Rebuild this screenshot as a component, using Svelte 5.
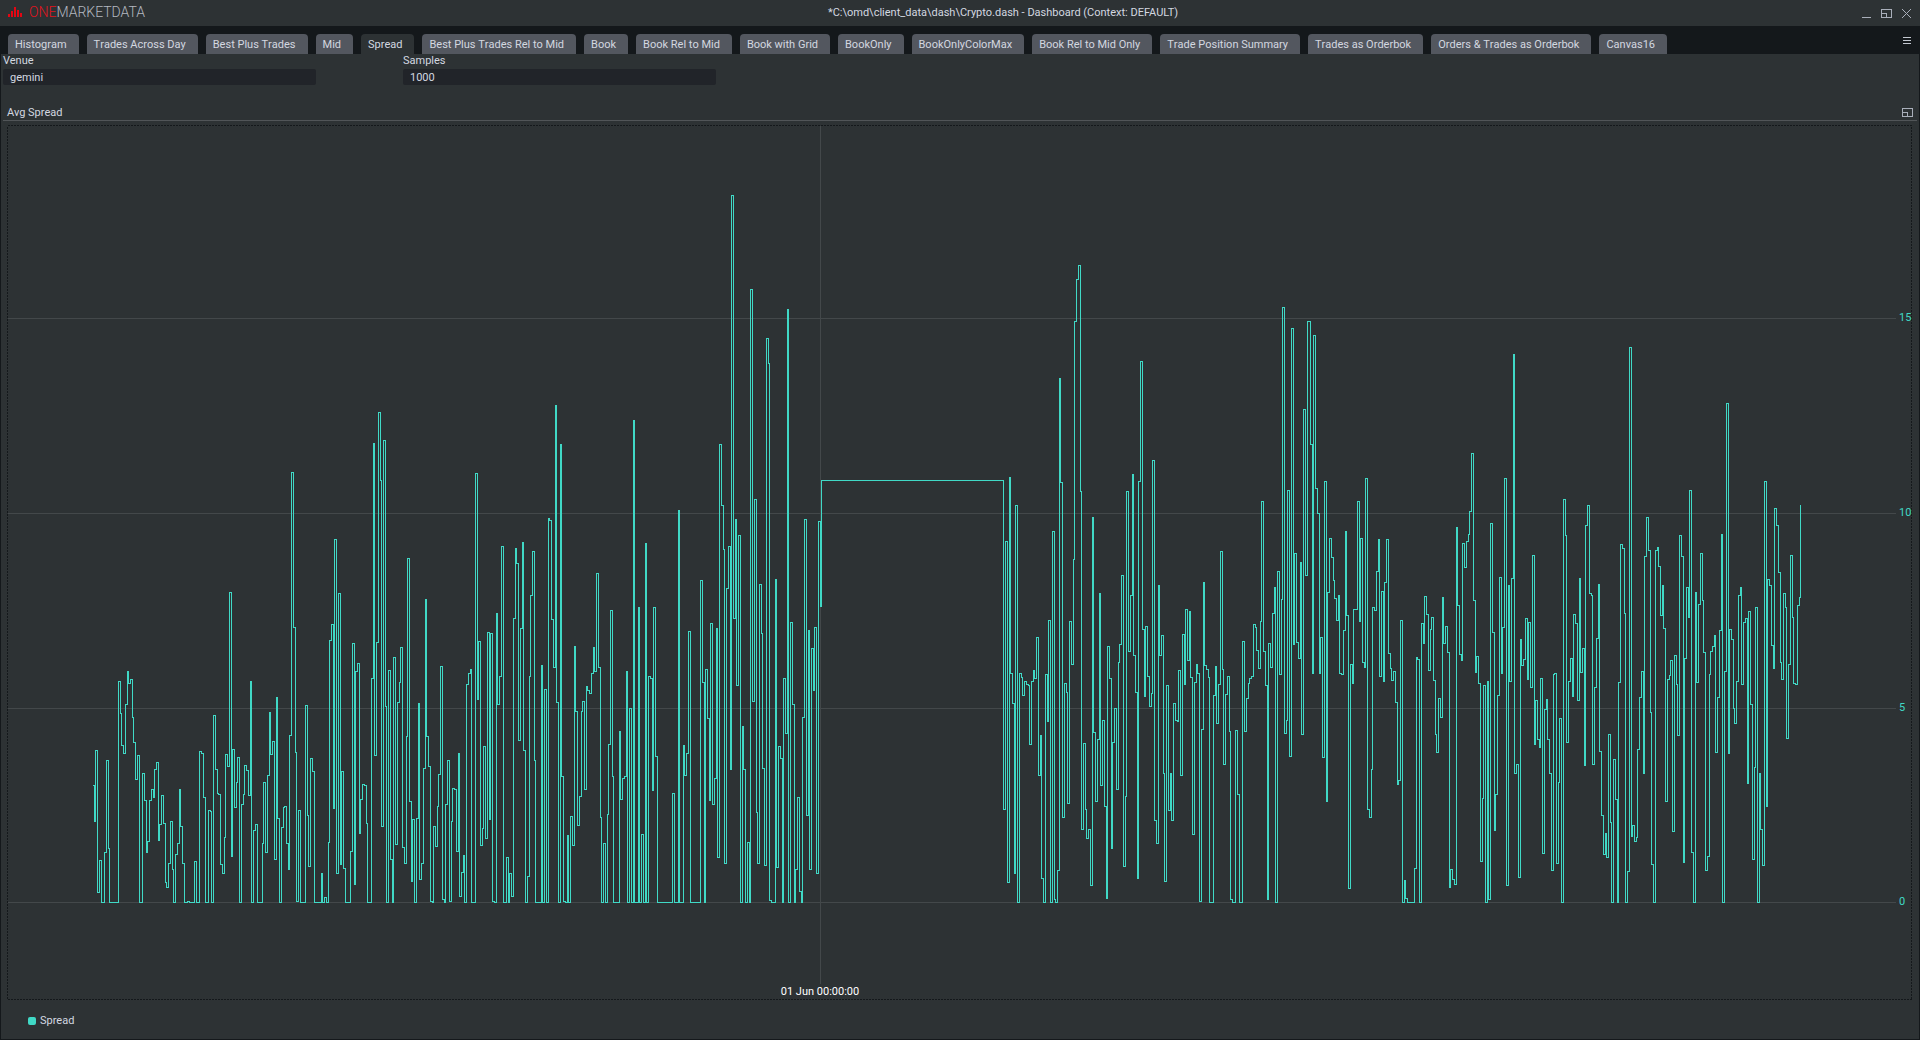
<script lang="ts">
	const tabs = [
		'Histogram',
		'Trades Across Day',
		'Best Plus Trades',
		'Mid',
		'Spread',
		'Best Plus Trades Rel to Mid',
		'Book',
		'Book Rel to Mid',
		'Book with Grid',
		'BookOnly',
		'BookOnlyColorMax',
		'Book Rel to Mid Only',
		'Trade Position Summary',
		'Trades as Orderbok',
		'Orders & Trades as Orderbok',
		'Canvas16'
	];
	let active = $state('Spread');
	let venue = $state('gemini');
	let samples = $state('1000');

	// plot area in chart units
	const plot = { x: 7, y: 125, w: 1905, h: 875 };
	const ticks = [
		{ value: 15, y: 318 },
		{ value: 10, y: 513 },
		{ value: 5, y: 708 },
		{ value: 0, y: 902 }
	];
	const dayX = 820;

	// step samples "x:level", packed in blocks with their own origin and resolution
	const kx = 3;
	const blocks = [
		{
			x: 80,
			y: 440,
			ky: 3,
			steps: `37:1036 44:1143 46:931 52:1357 58:1261 64:1387 73:1237 79:961 85:1225 88:1387 115:724 121:820 124:916 130:940 136:793
				142:694 145:730 151:718 157:832 160:907 166:1018 172:946 178:1387 187:1000 193:1081 199:1237 202:1204 208:1081 214:1048
				220:1072 223:988 229:967 235:1201 238:1153 244:1066 250:1150 256:1327 259:1342 265:1270 271:1144 277:1288 280:1387
				286:1243 292:1210 298:1048 301:1159 307:1270 313:1387 322:1384 328:1387 343:1264 349:1387 358:934 364:940 370:1072
				376:1387 385:1111 391:1114 394:1387 400:826 406:988 412:1060 415:1063 421:1273 427:1300 433:1192 436:943 442:979
				448:457 454:1249 457:928 463:1102 469:1027 472:952 478:1387 484:1093 490:1063 493:976 499:991 505:1066 511:724
				514:1387 520:1171 526:1153 532:1387 547:1210 550:1027 556:1237 562:1006 568:817 571:943 577:904 583:1258 589:772
				592:1135 598:1387 604:1162 610:1102 613:1099 619:1210 625:1288 628:886 634:97 640:562 646:937 649:1384 655:1111
				661:1387 676:796 682:1126 685:1279 691:955 697:994 703:1387 724:1300 727:1387 733:1372 739:1387 745:1207 748:601
				754:553 760:1105 763:298 769:1300 775:460 781:1273 784:994 790:1285 796:1387 811:1234 817:610 823:1333 826:694
				832:670 838:1180 841:1078 847:1033 853:1036 859:1150 862:1387 874:715 880:10 883:946 889:607`
		},
		{
			x: 360,
			y: 390,
			ky: 2.958,
			steps: `55:66 61:267 64:1291 70:149 76:936 79:1516 85:829 91:1388 97:1516 100:791 106:1344 112:924 118:865 121:761
				127:1353 133:1400 139:1025 142:498 148:1217 154:1454 157:1270 163:1516 169:1267 175:927 178:1448 184:1400 190:1119
				196:619 199:1025 205:1113 211:1513 217:1516 220:1291 226:1350 232:1232 235:1137 241:818 247:1507 253:1516 256:1226
				262:1096 268:1513 274:1276 277:1178 283:1181 289:1365 295:1075 298:1498 304:1427 310:1377 313:1516 319:871 325:838
				331:826 334:1516 346:247 352:915 355:744 361:1347 367:1297 370:1054 376:1326 382:717 388:1270 391:720 397:1513
				403:1516 409:661 412:930 418:847 424:463 430:1516 439:1383 445:1516 448:1430 454:1498 460:676 466:468 469:513
				475:1036 481:705 487:451 490:1066 496:1516 502:1439 508:847 511:607 517:477 523:1096 526:1516 544:815 547:1516
				553:886 559:1516 565:380 568:386 574:678 580:821 586:45 589:924 595:1516 601:161 604:1143 610:1513 616:1516
				622:1318 625:1516 631:1261 637:1347 643:758 646:951 652:1288 658:1202 664:951 667:921 673:1181 679:877 682:889
				688:897 694:838 700:761 703:832 709:542 715:821 721:1264 724:1516 730:1341 736:1516 742:1255 745:1048 751:652
				757:1143 760:1516 778:1010 781:1211 787:1149 793:1143 799:832 802:1516 808:942 814:1516 820:90 823:1516 835:643
				838:1516 844:1315 850:1516 856:454 859:1516 865:847 871:853 877:1185 880:643 886:1084`
		},
		{
			x: 600,
			y: 180,
			ky: 2.119,
			steps: `172:1531 217:1300 223:1531 235:700 238:1531 250:1198 253:1262 259:1215 265:957 271:1531 301:849 307:1065 313:1531
				316:1037 322:1141 328:1314 331:940 337:1323 343:1268 349:950 352:1436 358:560 364:690 370:783 373:1448 379:866
				385:777 391:1249 394:33 400:929 406:719 409:1071 415:753 421:1531 427:1158 430:1249 436:1531 442:1404 448:1531
				451:232 457:1105 463:677 469:1340 472:1448 478:857 484:961 487:1247 493:1452 499:336 505:389 508:1527 514:1531
				526:846 529:1457 535:1200 541:1226 547:1531 550:1056 556:1173 562:274 565:1531 571:938 577:1111 583:1531 586:1461
				592:1308 598:1508 604:1531 607:1139 613:719 619:1347 625:955 628:1461 634:993 640:1082 643:948 649:1469 655:724
				661:904 664:637`
		},
		{
			x: 980,
			y: 250,
			ky: 2.34,
			steps: `70:1309 76:682 82:1480 88:532 91:991 97:1061 103:1459 106:598 112:1527 118:991 124:1000 127:1042 133:1010
				139:1017 145:1019 148:1157 154:1010 160:984 163:1003 169:907 175:1230 181:1136 184:1471 190:1527 196:993 202:1103
				205:867 211:1527 217:659 223:1520 226:1527 232:1452 238:301 241:544 247:1328 253:1014 259:1035 262:1296 268:869
				274:970 280:724 283:167 289:69 295:36 301:565 304:1356 310:1155 316:1309 319:1377 325:1356 331:1487 337:626
				340:1129 346:1291 352:1145 358:804 361:1253 367:1101 373:1302 379:1518 382:928 388:1003 394:1401 397:1152 403:1073
				409:1262 415:965 418:923 424:762 430:1443 436:1279 439:565 445:939 451:808 457:525 460:949 466:1035 472:1471
				475:542 481:261 487:888 493:1045 496:881 502:998 508:1068 514:1038 517:492 523:1335 529:1389 535:785 538:949
				544:902 550:1225 553:1478 559:1019 565:1312 571:1225 574:1335 580:1061 586:1101 592:1103 595:984 601:1230 607:900
				613:1017 616:841 622:961 628:846 631:1000 637:1368 643:1012 649:970 652:991 658:1525 664:1122 670:778 673:972
				679:982 685:1000 688:1527 700:1042 706:975 709:1108 715:1017 721:705 727:982 730:1204 736:1040 742:998 748:1127
				751:1520 757:1527 766:1124 772:1274`
		},
		{
			x: 1230,
			y: 290,
			ky: 2.489,
			steps: `28:1525 37:875 43:1099 49:1016 55:979 58:967 64:962 70:832 76:840 79:897 85:942 91:825 94:526 100:899 106:984
				112:1517 115:880 121:939 127:805 133:740 136:1525 142:700 148:957 154:770 157:43 163:1104 169:1071 172:499 178:1161
				184:96 190:882 193:656 199:877 205:917 211:678 214:1106 220:297 226:710 232:78 241:384 247:954 250:113 256:494
				262:556 268:954 271:865 277:1163 283:476 289:1273 292:753 298:618 304:666 310:723 313:768 319:822 325:760 328:954
				334:957 340:847 346:601 349:810 355:1490 361:932 367:979 370:795 382:526 388:825 391:618 397:927 403:939 406:469
				412:1293 418:1313 424:1193 427:790 433:797 439:700 445:621 448:962 454:750 460:974 463:728 469:621 475:904 481:942
				484:972 490:949 496:1026 502:1230 505:1221 511:822 517:1525 523:1469 526:1514 532:1525 553:1440 559:914 562:919
				568:1525 574:830 580:880 583:763 589:807 595:947 601:845 604:815 610:972 616:1106 619:1151 625:1016 631:1064
				637:765 640:880 646:837 652:902 658:1487 661:1442 667:1467 673:1480 679:591 682:785 688:907 694:922 697:631
				703:690 709:626 715:608 718:551 724:407 730:773 736:952 739:912 745:979 751:1422 757:1265 760:984 766:1525
				772:974 775:1517 781:581 787:852 793:1345 796:1255 802:1009 808:715 814:954 817:840 823:469 829:1482 835:735
				838:974 844:718 850:160`
		},
		{
			x: 1510,
			y: 330,
			ky: 2.6576,
			steps: `13:1178 19:1154 25:1455 31:822 34:891 40:875 46:766 52:928 55:777 61:950 67:599 73:1101 76:984 82:1088 88:1109
				91:926 97:1391 103:1008 109:982 112:1088 118:1178 124:1437 130:915 133:913 139:1418 145:1202 148:1032 154:1521
				160:450 166:546 169:1096 175:934 181:873 187:974 190:756 196:780 202:984 208:660 211:910 217:846 223:1157 226:519
				232:466 238:700 244:705 247:1154 253:950 259:820 265:676 268:1120 274:1290 280:1394 286:1338 289:1402 295:1075
				301:1309 304:1521 310:1141 316:1247 322:1521 325:936 331:570 337:580 343:753 346:1521 352:1439 358:46 364:1345
				367:1317 373:1359 379:1348 382:1115 388:976 394:907 400:1178 403:602 409:498 415:586 421:1016 424:1420 430:1521
				436:586 442:578 445:628 451:758 457:679 460:793 466:1253 472:928 478:918 481:878 487:1332 493:865 499:942 502:1077
				508:546 514:602 520:1415 523:873 529:684 535:764 538:426 544:1388 550:1521 556:697 559:936 565:729 571:594 577:719
				580:857 586:1437 592:1399 598:915 601:854 607:841 613:812 616:1122 622:976 628:798 634:543 637:1521 643:907
				649:195 655:1125 658:796 664:822 670:1006 673:1046 679:934 685:705 691:684 694:942 700:777 706:766 712:1205
				715:748 721:995 727:1407 733:1162 736:737 742:1521 748:1178 751:1327 757:1423 763:402 769:1266 772:663 778:679
				784:838 790:899 793:474 799:519 805:644 811:883 814:928 820:700 826:737 829:1085 835:889 841:599 847:764 850:939
				856:942 862:732 868:711 871:463`
		}
	];

	const points = blocks.flatMap((b) =>
		b.steps.split(/\s+/).map((s) => {
			const [x, level] = s.split(':').map(Number);
			return [b.x + Math.floor(x / kx) + 0.5, b.y + Math.floor(level / b.ky) + 0.5];
		})
	);
	const line = points.map(([x, y], i) => (i ? `H${x}V${y}` : `M${x} ${y}`)).join('');

	const left = (x: number) => ((x - plot.x) / plot.w) * 100;
	const top = (y: number) => ((y - plot.y) / plot.h) * 100;
</script>

{#snippet restoreIcon()}
	<svg class="icon" viewBox="0 0 11 9" aria-hidden="true">
		<path d="M0.5 0.5h10v8h-10zM0.5 4.5h5v4" />
	</svg>
{/snippet}

<div class="app">
	<header class="titlebar">
		<div class="brand">
			<svg class="logo" viewBox="0 0 14 10" aria-hidden="true">
				<path d="M0 7h2v3h-2zM3 4h2v6h-2zM6 0h2v10h-2zM9 3h2v7h-2zM12 6h2v4h-2z" />
			</svg>
			<span><span class="one">ONE</span>MARKETDATA</span>
		</div>
		<h1>*C:\omd\client_data\dash\Crypto.dash - Dashboard (Context: DEFAULT)</h1>
		<div class="window">
			<button aria-label="Minimize">
				<svg class="icon" viewBox="0 0 11 9" aria-hidden="true"><path d="M1 8.5h9" /></svg>
			</button>
			<button aria-label="Restore">{@render restoreIcon()}</button>
			<button aria-label="Close">
				<svg class="icon smooth" viewBox="0 0 11 9" aria-hidden="true"><path d="M1 0l9 9M10 0l-9 9" /></svg>
			</button>
		</div>
	</header>

	<nav class="tabbar">
		<div class="tabs">
			{#each tabs as tab}
				<button class="tab" class:active={tab === active} onclick={() => (active = tab)}>{tab}</button>
			{/each}
		</div>
		<button class="menu" aria-label="Menu">
			<svg viewBox="0 0 8 7" aria-hidden="true"><path d="M0 0.5h8M0 3.5h8M0 6.5h8" /></svg>
		</button>
	</nav>

	<main>
		<form class="params">
			<div class="field">
				<label for="venue">Venue</label>
				<input id="venue" type="text" bind:value={venue} />
			</div>
			<div class="field">
				<label for="samples">Samples</label>
				<input id="samples" type="text" bind:value={samples} />
			</div>
		</form>

		<section class="panel">
			<div class="panel-head">
				<h2>Avg Spread</h2>
				<button aria-label="Expand panel">{@render restoreIcon()}</button>
			</div>

			<div class="plot">
				<svg
					class="chart"
					viewBox="{plot.x} {plot.y} {plot.w} {plot.h}"
					preserveAspectRatio="none"
					role="img"
					aria-label="Average spread"
				>
					<rect class="frame" x={plot.x + 0.5} y={plot.y + 0.5} width={plot.w - 1} height={plot.h - 1} />
					{#each ticks as t}
						<path class="grid" d="M{plot.x + 1} {t.y + 0.5}H1896" />
					{/each}
					<path class="grid" d="M{dayX + 0.5} {plot.y + 1}V984" />
					<path class="line" d={line} />
				</svg>
				{#each ticks as t}
					<span class="tick" style="top: {top(t.y)}%">{t.value}</span>
				{/each}
				<span class="day" style="left: {left(dayX)}%">01 Jun 00:00:00</span>
			</div>

			<div class="legend"><span class="swatch"></span>Spread</div>
		</section>
	</main>
</div>

<style>
	:global(body) {
		margin: 0;
		background: #2d3234;
	}
	.app {
		display: flex;
		flex-direction: column;
		min-height: 100vh;
		font: 11px/14px Roboto, sans-serif;
		color: #d3d8e0;
		background: #2d3234;
	}
	button {
		display: flex;
		padding: 0;
		border: 0;
		background: none;
		font: inherit;
		color: inherit;
	}
	h1,
	h2 {
		margin: 0;
		font-size: 11px;
		font-weight: 400;
	}
	.titlebar {
		display: flex;
		align-items: center;
		justify-content: space-between;
		height: 26px;
		padding: 0 8px 2px;
		box-sizing: border-box;
	}
	.titlebar h1 {
		padding-top: 2px;
	}
	.brand {
		display: flex;
		align-items: center;
		gap: 7px;
		font-size: 14px;
		font-weight: 300;
		color: #b4b8c0;
	}
	.one {
		color: #e0141e;
	}
	.logo {
		width: 14px;
		height: 10px;
		fill: #e30613;
		shape-rendering: crispEdges;
	}
	.window {
		display: flex;
		gap: 9px;
		padding-top: 3px;
	}
	.icon {
		width: 11px;
		height: 9px;
		fill: none;
		stroke: #a9afba;
		shape-rendering: crispEdges;
	}
	.smooth {
		shape-rendering: auto;
	}
	.tabbar {
		display: flex;
		justify-content: space-between;
		height: 28px;
		padding: 0 9px 0 8px;
		background: #14181b;
	}
	.tabs {
		display: flex;
		align-items: flex-end;
		gap: 8px;
		font-kerning: none;
	}
	.tab {
		align-items: center;
		height: 20px;
		padding: 2px 12px 0 7px;
		border-radius: 4px 4px 0 0;
		background: #53575f;
		white-space: nowrap;
	}
	.tab.active {
		background: #2d3234;
	}
	.menu {
		align-items: flex-start;
		padding-top: 11px;
	}
	.menu svg {
		width: 8px;
		height: 7px;
		stroke: #c3c8d0;
		shape-rendering: crispEdges;
	}
	main {
		flex: 1;
		display: flex;
		flex-direction: column;
		border: 1px solid #14181b;
		border-top: 0;
	}
	.params {
		display: flex;
		gap: 87px;
		padding: 0 2px;
	}
	.field {
		display: flex;
		flex-direction: column;
		gap: 1px;
		width: 313px;
	}
	.field input {
		height: 16px;
		padding: 0 7px;
		border: 0;
		border-radius: 2px;
		box-sizing: border-box;
		background: #212429;
		font: inherit;
		color: inherit;
	}
	.panel {
		flex: 1;
		display: flex;
		flex-direction: column;
		padding: 20px 2px 0;
	}
	.panel-head {
		display: flex;
		align-items: center;
		justify-content: space-between;
		height: 15px;
		padding: 0 4px;
		border-bottom: 1px solid #515558;
	}
	.plot {
		position: relative;
		flex: 1;
		margin: 4px 5px 0 4px;
	}
	.chart {
		position: absolute;
		width: 100%;
		height: 100%;
		fill: none;
		shape-rendering: crispEdges;
	}
	.chart path,
	.chart rect {
		vector-effect: non-scaling-stroke;
	}
	.frame {
		stroke: #14181b;
		stroke-dasharray: 2 1;
	}
	.grid {
		stroke: #43484a;
	}
	.line {
		stroke: #40d9c6;
	}
	.tick {
		position: absolute;
		right: 1px;
		width: 12px;
		text-align: left;
		transform: translateY(-50%);
		color: #40d9c6;
	}
	.day {
		position: absolute;
		bottom: 1px;
		transform: translateX(-50%);
		color: #ffffff;
	}
	.legend {
		display: flex;
		align-items: center;
		gap: 4px;
		padding: 14px 25px 11px;
	}
	.swatch {
		width: 8px;
		height: 8px;
		border-radius: 2px;
		background: #40d9c6;
	}
</style>
